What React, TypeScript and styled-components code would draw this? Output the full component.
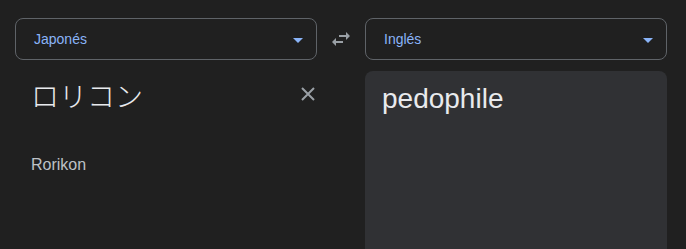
import React from 'react';
import styled, { createGlobalStyle } from 'styled-components';

const GlobalStyle = createGlobalStyle`
  html, body {
    margin: 0;
    padding: 0;
    background: #202020;
    overflow: hidden;
  }
  body {
    font-family: 'Liberation Sans', Arial, 'Noto Sans CJK JP', sans-serif;
  }
`;

const Page = styled.div`
  display: grid;
  grid-template-columns: 1fr 48px 1fr;
  grid-template-rows: 42px auto;
  row-gap: 11px;
  padding: 18px 19px 0 15px;
  height: 249px;
  box-sizing: border-box;
  overflow: hidden;
`;

const Select = styled.div`
  display: flex;
  align-items: center;
  justify-content: space-between;
  padding: 0 13px 0 18px;
  border: 1px solid #5f6368;
  border-radius: 8px;
  font-size: 14px;
  color: #8ab4f8;
`;

const Caret = styled.span`
  width: 0;
  height: 0;
  border-left: 5px solid transparent;
  border-right: 5px solid transparent;
  border-top: 5px solid #8ab4f8;
  margin-top: 2px;
`;

const SwapButton = styled.div`
  display: flex;
  align-items: center;
  justify-content: center;
  color: #9aa0a6;
`;

const Panel = styled.div<{ $filled?: boolean }>`
  display: flex;
  flex-direction: column;
  min-height: 220px;
  padding: 10px 2px 0 ${(p) => (p.$filled ? '17px' : '16px')};
  border-radius: 8px;
  background: ${(p) => (p.$filled ? '#303134' : 'transparent')};
`;

const InputRow = styled.div`
  display: flex;
  align-items: flex-start;
  justify-content: space-between;
`;

const MainText = styled.div<{ $cjk?: boolean }>`
  font-size: 28px;
  line-height: 36px;
  color: #e8eaed;
  font-family: ${(p) =>
    p.$cjk
      ? "'Noto Sans CJK JP', sans-serif"
      : "'Liberation Sans', Arial, sans-serif"};
  font-weight: ${(p) => (p.$cjk ? 300 : 400)};
  margin-top: ${(p) => (p.$cjk ? '-4px' : '0')};
`;

const ClearButton = styled.div`
  display: flex;
  align-items: center;
  justify-content: center;
  width: 14px;
  height: 14px;
  margin-top: 6px;
  color: #9aa0a6;
`;

const Romanization = styled.div`
  margin-top: 42px;
  font-size: 16px;
  line-height: 20px;
  color: #bdc1c6;
`;

const SwapIcon = () => (
  <svg width="24" height="24" viewBox="0 0 24 24" fill="currentColor">
    <path d="M6.99 11L3 15l3.99 4v-3H14v-2H6.99v-3zM21 9l-3.99-4v3H10v2h7.01v3L21 9z" />
  </svg>
);

const CloseIcon = () => (
  <svg width="14" height="14" viewBox="0 0 14 14" stroke="currentColor" strokeWidth="2">
    <path d="M1 1L13 13M13 1L1 13" />
  </svg>
);

const App = () => (
  <>
    <GlobalStyle />
    <Page>
      <Select>
        <span>Japonés</span>
        <Caret />
      </Select>
      <SwapButton>
        <SwapIcon />
      </SwapButton>
      <Select>
        <span>Inglés</span>
        <Caret />
      </Select>
      <Panel>
        <InputRow>
          <MainText $cjk lang="ja">ロリコン</MainText>
          <ClearButton>
            <CloseIcon />
          </ClearButton>
        </InputRow>
        <Romanization>Rorikon</Romanization>
      </Panel>
      <div />
      <Panel $filled>
        <MainText>pedophile</MainText>
      </Panel>
    </Page>
  </>
);

export default App;
